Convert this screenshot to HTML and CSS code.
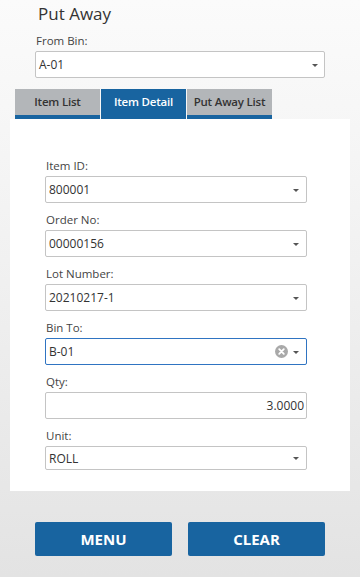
FILE: index.html
```html
<!DOCTYPE html>
<html>
<head>
<meta charset="utf-8">
<link rel="stylesheet" href="styles.css">
</head>
<body>
<div class="page">
  <h1 class="title">Put Away</h1>
  <div class="top-field">
    <div class="label">From Bin:</div>
    <div class="select wide"><span class="val">A-01</span><span class="arrow"></span></div>
  </div>
  <div class="tabs">
    <div class="tab">Item List</div>
    <div class="tab active">Item Detail</div>
    <div class="tab">Put Away List</div>
  </div>
  <div class="panel">
    <div class="field">
      <div class="label">Item ID:</div>
      <div class="select"><span class="val">800001</span><span class="arrow"></span></div>
    </div>
    <div class="field">
      <div class="label">Order No:</div>
      <div class="select"><span class="val">00000156</span><span class="arrow"></span></div>
    </div>
    <div class="field">
      <div class="label">Lot Number:</div>
      <div class="select"><span class="val">20210217-1</span><span class="arrow"></span></div>
    </div>
    <div class="field">
      <div class="label">Bin To:</div>
      <div class="select focused"><span class="val">B-01</span>
        <span class="clear"><svg width="13" height="13" viewBox="0 0 13 13"><circle cx="6.5" cy="6.5" r="6.5" fill="#a9a9a9"/><path d="M4.2 4.2 L8.8 8.8 M8.8 4.2 L4.2 8.8" stroke="#fff" stroke-width="1.8" stroke-linecap="round"/></svg></span>
        <span class="arrow"></span></div>
    </div>
    <div class="field">
      <div class="label">Qty:</div>
      <div class="select num"><span class="val">3.0000</span></div>
    </div>
    <div class="field last">
      <div class="label">Unit:</div>
      <div class="select short"><span class="val">ROLL</span><span class="arrow"></span></div>
    </div>
  </div>
  <div class="buttons">
    <button class="btn">MENU</button>
    <button class="btn">CLEAR</button>
  </div>
</div>
</body>
</html>
```

FILE: styles.css
```css
html, body {
  margin: 0;
  padding: 0;
}
body {
  width: 360px;
  height: 577px;
  overflow: hidden;
  background: linear-gradient(180deg, #fbfbfb 0%, #f1f1f1 45%, #e3e3e3 100%);
  font-family: "Open Sans", "Noto Sans", sans-serif;
  color: #333;
}
.page {
  display: flex;
  flex-direction: column;
}
.title {
  margin: 0;
  padding: 0 0 0 38px;
  font-size: 17px;
  font-weight: 400;
  line-height: 28px;
  color: #333;
  height: 28px;
}
.top-field {
  margin: 5px 35px 0;
}
.label {
  font-size: 11.5px;
  line-height: 16px;
  color: #444;
  margin-bottom: 2px;
  padding-left: 1px;
}
.select {
  box-sizing: border-box;
  height: 27px;
  border: 1px solid #c4c4c4;
  border-radius: 2px;
  background: #fff;
  display: flex;
  align-items: center;
  padding: 0 7px 0 3px;
  font-size: 12px;
  color: #333;
}
.select .val {
  flex: 1;
}
.arrow {
  width: 0;
  height: 0;
  border-left: 3px solid transparent;
  border-right: 3px solid transparent;
  border-top: 3px solid #555;
  margin-top: 1px;
}
.wide .arrow {
  margin-right: -1px;
}
.select.focused {
  border-color: #2f74c2;
}
.clear {
  display: flex;
  margin-right: 5px;
}
.select.num .val {
  text-align: right;
}
.select.num {
  padding-right: 2px;
}
.select.short {
  height: 24px;
}
.tabs {
  display: flex;
  gap: 1px;
  margin: 11px 0 0 15px;
}
.tab {
  box-sizing: border-box;
  width: 85px;
  height: 30px;
  background: #b3b6b9;
  border-bottom: 4px solid #1864a0;
  font-size: 11.5px;
  letter-spacing: -0.2px;
  font-weight: 600;
  color: #333;
  display: flex;
  align-items: center;
  justify-content: center;
  padding-bottom: 1px;
}
.tab.active {
  background: #1864a0;
  color: #fff;
}
.panel {
  margin: 0 10px;
  background: #fff;
  padding: 39px 43px 21px 35px;
}
.field {
  margin-bottom: 9px;
}
.field.last {
  margin-bottom: 0;
}
.buttons {
  display: flex;
  gap: 16px;
  margin: 31px 35px 0;
}
.btn {
  flex: 1;
  height: 34px;
  border: none;
  border-radius: 2px;
  background: #1864a0;
  color: #fff;
  font-family: "Open Sans", "Noto Sans", sans-serif;
  font-weight: 700;
  font-size: 15px;
  padding: 0;
}
```
